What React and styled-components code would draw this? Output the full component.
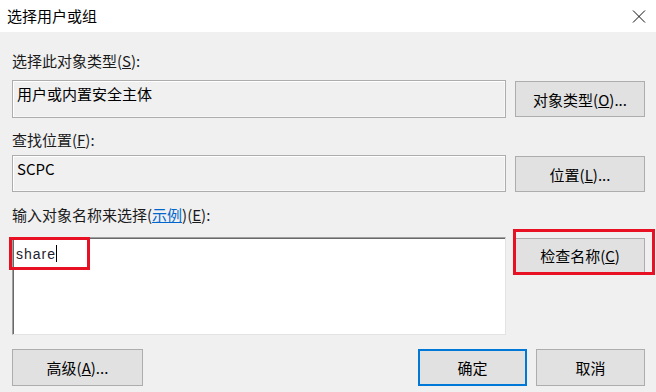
import styled, { createGlobalStyle } from 'styled-components';

const GlobalStyle = createGlobalStyle`
  html, body {
    margin: 0;
    padding: 0;
    background: #f0f0f0;
  }
  body {
    font-family: "Noto Sans CJK SC", "Noto Sans", sans-serif;
    font-size: 15px;
    color: #000;
  }
`;

const Dialog = styled.div`
  width: 656px;
  height: 392px;
  background: #f0f0f0;
  overflow: hidden;
`;

const TitleBar = styled.div`
  height: 32px;
  background: #fff;
  display: flex;
  align-items: center;
  justify-content: space-between;
  padding: 0 10px 0 7px;
  box-sizing: border-box;
`;

const Title = styled.span`
  font-size: 15px;
  line-height: 20px;
  color: #000;
`;

const CloseBtn = styled.div`
  width: 14px;
  height: 14px;
  display: flex;
  align-items: center;
  justify-content: center;
`;

const Content = styled.div`
  padding: 0 11px 0 12px;
  display: flex;
  flex-direction: column;
`;

const Label = styled.div`
  font-size: 15px;
  line-height: 20px;
  height: 20px;
  margin-top: ${(p) => p.$top}px;
  margin-bottom: ${(p) => p.$bottom}px;
  color: #1a1a1a;

  a {
    color: #0066cc;
    text-decoration: underline;
  }
`;

const Row = styled.div`
  display: grid;
  grid-template-columns: 494px 130px;
  column-gap: 9px;
  align-items: start;
`;

const ReadBox = styled.div`
  height: ${(p) => p.$h}px;
  box-sizing: border-box;
  border: 1px solid #adadad;
  box-shadow: inset 1px 1px 0 #fff, inset -1px -1px 0 #f7f7f7;
  background: #f0f0f0;
  padding: 3px 0 0 4px;
  line-height: 20px;
  font-size: 15px;
`;

const Button = styled.div`
  height: ${(p) => p.$h || 37}px;
  width: ${(p) => p.$w || 130}px;
  margin-top: ${(p) => p.$mt || 0}px;
  box-sizing: border-box;
  background: #e1e1e1;
  border: 1px solid ${(p) => (p.$primary ? '#0078d7' : '#adadad')};
  box-shadow: ${(p) => (p.$primary ? 'inset 0 0 0 1px #0078d7' : 'none')};
  display: flex;
  align-items: center;
  justify-content: center;
  font-size: 15px;
  color: #000;
  position: relative;
`;

const Highlight = styled.div`
  position: absolute;
  border: 3px solid #e81123;
  box-sizing: border-box;
  pointer-events: none;
  left: ${(p) => p.$l}px;
  top: ${(p) => p.$t}px;
  width: ${(p) => p.$w}px;
  height: ${(p) => p.$h}px;
`;

const TextArea = styled.div`
  position: relative;
  height: 98px;
  box-sizing: border-box;
  background: #fff;
  border-top: 1px solid #a0a0a0;
  border-left: 1px solid #a0a0a0;
  border-right: 1px solid #e3e3e3;
  border-bottom: 1px solid #e3e3e3;
  box-shadow: inset 1px 1px 0 #696969;
  padding: 4px 0 0 3px;
`;

const Typed = styled.span`
  font-family: "Liberation Sans", "Noto Sans", sans-serif;
  font-size: 14px;
  letter-spacing: 1px;
  line-height: 20px;
  color: #1e2230;
`;

const Caret = styled.span`
  display: inline-block;
  width: 1px;
  height: 17px;
  background: #000;
  vertical-align: -3px;
`;

const ButtonCell = styled.div`
  position: relative;
`;

const Footer = styled.div`
  display: flex;
  align-items: center;
  margin-top: 14px;
  gap: 9px;
`;

const Spacer = styled.div`
  flex: 1;
`;

const App = () => {
  return (
    <>
      <GlobalStyle />
      <Dialog>
        <TitleBar>
          <Title>选择用户或组</Title>
          <CloseBtn>
            <svg width="14" height="13" viewBox="0 0 14 13">
              <path d="M1 0.5 L13 12.5 M13 0.5 L1 12.5" stroke="#111" strokeWidth="1" fill="none" />
            </svg>
          </CloseBtn>
        </TitleBar>
        <Content>
          <Label $top={19} $bottom={9}>
            选择此对象类型(<u>S</u>):
          </Label>
          <Row>
            <ReadBox $h={38}>用户或内置安全主体</ReadBox>
            <Button $h={36} $mt={1}>
              对象类型(<u>O</u>)...
            </Button>
          </Row>

          <Label $top={12} $bottom={5}>
            查找位置(<u>F</u>):
          </Label>
          <Row>
            <ReadBox $h={37}>SCPC</ReadBox>
            <Button $h={36} $mt={1}>
              位置(<u>L</u>)...
            </Button>
          </Row>

          <Label $top={13} $bottom={12}>
            输入对象名称来选择(<a>示例</a>)(<u>E</u>):
          </Label>
          <Row>
            <TextArea>
              <Typed>share</Typed>
              <Caret />
              <Highlight $l={-4} $t={-1} $w={81} $h={33} />
            </TextArea>
            <ButtonCell>
              <Button $h={35} $mt={1}>
                检查名称(<u>C</u>)
              </Button>
              <Highlight $l={-2} $t={-8} $w={142} $h={46} />
            </ButtonCell>
          </Row>

          <Footer>
            <Button $w={131}>
              高级(<u>A</u>)...
            </Button>
            <Spacer />
            <Button $w={109} $primary>
              确定
            </Button>
            <Button $w={109}>取消</Button>
          </Footer>
        </Content>
      </Dialog>
    </>
  );
};

export default App;
